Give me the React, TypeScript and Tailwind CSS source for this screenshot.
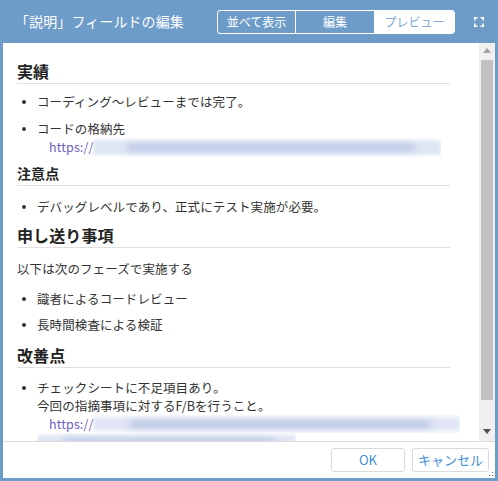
import React from "react";

const font = { fontFamily: '"Noto Sans CJK JP", "Noto Sans", sans-serif' };

function Blur({ className }: { className: string }) {
  return (
    <div className={`relative overflow-hidden ${className}`}>
      <div className="absolute inset-x-0 top-[2px] bottom-[2px] bg-[#dfe5f3] blur-[2px]" />
      <div className="absolute left-[10%] right-[8%] top-[35%] h-[35%] bg-[#bcc8e6] blur-[3px]" />
    </div>
  );
}

function Item({ children }: { children: React.ReactNode }) {
  return (
    <div className="flex">
      <div className="w-[20px] shrink-0 flex justify-center pt-[6px]">
        <div className="w-[4px] h-[4px] rounded-full bg-[#333] ml-[-6px]" />
      </div>
      <div className="flex-1 min-w-0">{children}</div>
    </div>
  );
}

export default function App() {
  return (
    <div className="w-[498px] h-[481px] bg-[#6d9cc8] flex flex-col" style={font}>
      {/* Header */}
      <div className="h-[43px] shrink-0 flex items-center pl-[15px] pr-[14px]">
        <div className="text-white text-[14px] tracking-[0.1px] flex-1">「説明」フィールドの編集</div>
        <div className="flex h-[24px] mr-[19px] mt-[1px] border border-white rounded-[3px] overflow-hidden text-[12px]">
          <div className="w-[78px] flex items-center justify-center text-white border-r border-white">並べて表示</div>
          <div className="w-[79px] flex items-center justify-center text-white border-r border-white">編集</div>
          <div className="w-[79px] flex items-center justify-center bg-white text-[#7fa9d2]">プレビュー</div>
        </div>
        <svg width="10" height="10" viewBox="0 0 10 10" className="mt-[1px]">
          <g fill="none" stroke="#ffffff" strokeWidth="1.6">
            <path d="M0.8 3.5V0.8H3.5" />
            <path d="M6.5 0.8H9.2V3.5" />
            <path d="M9.2 6.5V9.2H6.5" />
            <path d="M3.5 9.2H0.8V6.5" />
          </g>
        </svg>
      </div>

      {/* Body */}
      <div className="flex-1 mx-[3px] mb-[3px] bg-white flex flex-col min-h-0">
        <div className="h-[399px] flex border-b border-[#dcdcdc] shrink-0">
          <div className="flex-1 overflow-hidden pl-[14px] pr-[29px] pt-[17px] text-[12.5px] tracking-[0.1px] text-[#333] leading-[16px]">
            <div className="text-[16px] font-bold text-[#222] leading-[23px] border-b border-[#e0e0e0]">実績</div>
            <div className="mt-[10px]">
              <Item>コーディング～レビューまでは完了。</Item>
              <div className="mt-[11px]">
                <Item>
                  <div>コードの格納先</div>
                  <div className="flex items-center h-[16px] mt-[2px]">
                    <span className="ml-[12px] text-[#6f5fc0] text-[12.5px] leading-[14px]">https://</span>
                    <Blur className="h-[19px] w-[348px] shrink-0" />
                  </div>
                </Item>
              </div>
            </div>

            <div className="mt-[7px] text-[14px] font-bold text-[#222] leading-[23px] border-b border-[#e0e0e0]">注意点</div>
            <div className="mt-[13px]">
              <Item>デバッグレベルであり、正式にテスト実施が必要。</Item>
            </div>

            <div className="mt-[8px] text-[16px] font-bold text-[#222] leading-[24px] border-b border-[#e0e0e0]">申し送り事項</div>
            <div className="mt-[13px]">以下は次のフェーズで実施する</div>
            <div className="mt-[14px]">
              <Item>識者によるコードレビュー</Item>
              <div className="mt-[10px]">
                <Item>長時間検査による検証</Item>
              </div>
            </div>

            <div className="mt-[10px] text-[16px] font-bold text-[#222] leading-[24px] border-b border-[#e0e0e0]">改善点</div>
            <div className="mt-[12px]">
              <Item>
                <div>チェックシートに不足項目あり。</div>
                <div className="mt-[2px]">今回の指摘事項に対するF/Bを行うこと。</div>
                <div className="flex items-center h-[16px] mt-[2px]">
                  <span className="ml-[12px] text-[#6f5fc0] text-[12.5px] leading-[14px]">https://</span>
                  <Blur className="h-[18px] w-[367px] shrink-0" />
                </div>
                <Blur className="h-[14px] w-[259px] mt-[1px]" />
              </Item>
            </div>
          </div>

          {/* Scrollbar */}
          <div className="w-[16px] shrink-0 bg-[#f0f0f0] flex flex-col items-center">
            <div className="h-[15px] flex items-center justify-center">
              <svg width="8" height="5" viewBox="0 0 8 5"><path d="M0 5L4 0L8 5Z" fill="#a3a3a3" /></svg>
            </div>
            <div className="w-[12px] h-[340px] bg-[#c1c1c1] mt-[2px]" />
            <div className="flex-1" />
            <div className="h-[15px] flex items-center justify-center mb-[2px]">
              <svg width="8" height="5" viewBox="0 0 8 5"><path d="M0 0L4 5L8 0Z" fill="#505050" /></svg>
            </div>
          </div>
        </div>

        {/* Footer */}
        <div className="flex-1 relative flex items-center justify-end pr-[6px] gap-[7px]">
          <div className="w-[74px] h-[24px] border border-[#dadada] rounded-[3px] flex items-center justify-center text-[13px] text-[#3f8fd6]">OK</div>
          <div className="w-[77px] h-[24px] border border-[#dadada] rounded-[3px] flex items-center justify-center text-[13px] text-[#3f8fd6]">キャンセル</div>
          <svg width="5" height="5" viewBox="0 0 5 5" className="absolute right-[1px] bottom-[1px]">
            <rect x="3" y="0" width="1" height="1" fill="#666" />
            <rect x="0" y="3" width="1" height="1" fill="#666" />
            <rect x="3" y="3" width="1" height="1" fill="#666" />
          </svg>
        </div>
      </div>
    </div>
  );
}
